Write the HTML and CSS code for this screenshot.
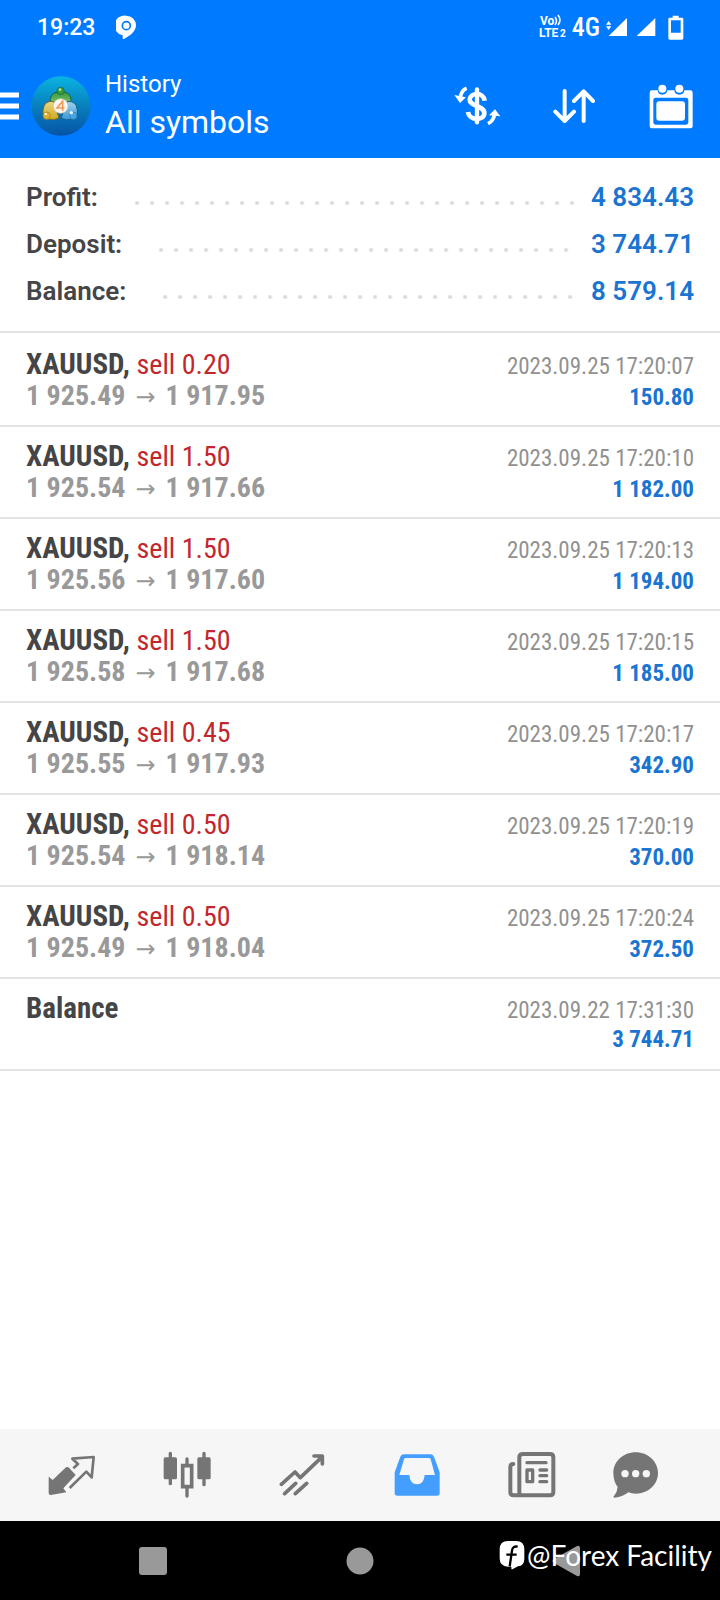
FILE: index.html
```html
<!DOCTYPE html>
<html lang="en">
<head>
<meta charset="utf-8">
<meta name="viewport" content="width=device-width, initial-scale=1">
<title>History</title>
<link rel="stylesheet" href="styles.css">
</head>
<body>
<header class="top">
  <div class="status">
    <span class="clock">19:23</span>
    <svg class="pin" width="20" height="24" viewBox="346 42 60 72"><path fill="#fff" d="M377 44a29 29 0 0 1 29 29c0 12-8 21-16 28l-19 12c-3 2-5 1-5-2v-8a29 29 0 0 1 11-59z"/><circle cx="377" cy="74" r="12" fill="none" stroke="#007aff" stroke-width="5"/></svg>
    <span class="spacer"></span>
    <svg class="volte" width="30" height="30" viewBox="0 0 30 30"><text class="volte-text" x="2" y="13">Vo</text><path d="M17 5q3 4 0 8M20 3q4 5 0 10" fill="none" stroke="#fff" stroke-width="1.6"/><text class="volte-text" x="1" y="25">LTE</text><text class="volte-small" x="22" y="25">2</text></svg>
    <span class="net">4G</span>
    <svg class="sig" width="22" height="20" viewBox="735 50 66 60"><path fill="#fff" d="M743 107l55-54v54zM735 73l8-11 8 11zM735 78l8 11 8-11z"/></svg>
    <svg class="sig2" width="20" height="20" viewBox="827 50 60 60"><path fill="#fff" d="M829 107l56-54v54z"/></svg>
    <svg width="16" height="25" viewBox="923 40 48 75"><path fill="#fff" fill-rule="evenodd" d="M937 42h18v6h10q4 0 4 4v58q0 4-4 4h-37q-4 0-4-4V52q0-4 4-4h9zM932 56v37h29V56z"/></svg>
  </div>
  <div class="appbar">
    <button class="plain menu" aria-label="Menu"><svg width="19" height="28" viewBox="0 0 19 28"><path stroke="#fff" stroke-width="5" d="M0 3h19M0 14h19M0 25h19"/></svg></button>
    <svg class="logo" width="60" height="60" viewBox="92 226 180 180">
      <defs>
        <linearGradient id="bg" x1="0" y1="0" x2="0" y2="1"><stop offset="0" stop-color="#0ab4e2"/><stop offset=".5" stop-color="#087fbd"/><stop offset="1" stop-color="#0754a6"/></linearGradient>
        <linearGradient id="gr" x1="0" y1="0" x2="0" y2="1"><stop offset="0" stop-color="#2f9a3f"/><stop offset="1" stop-color="#8cc66c"/></linearGradient>
        <linearGradient id="ye" x1="0" y1="0" x2="0" y2="1"><stop offset="0" stop-color="#e9d985"/><stop offset="1" stop-color="#d3a51f"/></linearGradient>
        <linearGradient id="bl" x1="0" y1="0" x2="0" y2="1"><stop offset="0" stop-color="#9fd3ee"/><stop offset="1" stop-color="#3b97d6"/></linearGradient>
      </defs>
      <circle cx="182" cy="316" r="89" fill="url(#bg)"/>
      <path d="M150 312q-4-34 20-38h22q24 4 20 38z" fill="url(#gr)" stroke="#1b5f4a" stroke-width="3"/>
      <circle cx="181" cy="271" r="11" fill="#3a9b3b" stroke="#1b5f4a" stroke-width="2"/><circle cx="179" cy="267" r="4" fill="#b5e39a"/>
      <path d="M160 302q-28-2-31 22-6 22 12 31 20 6 35-3z" fill="url(#ye)" stroke="#6a6a35" stroke-width="3"/>
      <circle cx="139" cy="345" r="11" fill="#dcb02c" stroke="#9a7a1c" stroke-width="2"/><circle cx="136" cy="340" r="4" fill="#fff4bd"/>
      <path d="M202 302q26 0 28 22 6 22-12 31-20 6-36-2z" fill="url(#bl)" stroke="#17608f" stroke-width="3"/>
      <circle cx="219" cy="345" r="11" fill="#4aa5df" stroke="#2a77b0" stroke-width="2"/><circle cx="213" cy="336" r="5" fill="#e5f7ff"/>
      <circle cx="181" cy="316" r="22" fill="#fdf6ee" stroke="#c9c3ae" stroke-width="2"/>
      <path d="M187 331v-29l-17 20h22" fill="none" stroke="#f09a5c" stroke-width="5"/>
    </svg>
    <div class="titles"><span class="section">History</span><h1 class="title">All symbols</h1></div>
    <button class="plain money" aria-label="Symbol filter"><svg width="48" height="42" viewBox="283 254 144 126"><g fill="none" stroke="#fff"><path stroke-width="13" stroke-linecap="round" d="M352 267v99"/><path stroke-width="14" d="M375 301c-3-26-43-26-45-3 0 20 46 18 44 42-3 22-46 21-49-5"/><path stroke-width="11" d="M321 264q-16 6-19 27M385 370q17-9 20-30"/></g><path fill="#fff" d="M284 284l35 7-18 17zM388 345l18-18 16 21z"/></svg></button>
    <button class="plain sort" aria-label="Sort"><svg width="42" height="36" viewBox="580 262 126 108"><path fill="none" stroke="#fff" stroke-width="12" stroke-linecap="round" stroke-linejoin="round" d="M615 271v89M587 333l28 28 28-28M672 361v-88M643 301l29-29 28 29"/></svg></button>
    <button class="plain" aria-label="Period"><svg width="44" height="45" viewBox="866 247 132 135"><path fill="#fff" fill-rule="evenodd" d="M874 266h18q1 13 14 13t15-13h21q1 13 15 13t15-13h18q7 0 7 7v101q0 6-7 6H874q-6 0-6-6V273q0-7 6-7zM886 288q-7 0-7 7v66q0 8 8 8h89q8 0 8-8v-66q0-7-7-7z"/><circle cx="906" cy="261" r="12" fill="#fff"/><circle cx="957" cy="261" r="12" fill="#fff"/><rect x="888" y="299" width="86" height="58" rx="9" fill="#fff"/></svg></button>
  </div>
</header>
<main class="content">
  <dl class="summary">
    <div class="sum-row"><dt>Profit:</dt><dd><span class="dots"></span>4 834.43</dd></div>
    <div class="sum-row"><dt>Deposit:</dt><dd><span class="dots"></span>3 744.71</dd></div>
    <div class="sum-row"><dt>Balance:</dt><dd><span class="dots"></span>8 579.14</dd></div>
  </dl>
  <ul class="deals">
    <li class="deal"><div class="line"><span class="symbol">XAUUSD, <span class="side">sell 0.20</span></span><time class="date">2023.09.25 17:20:07</time></div><div class="line"><span class="prices">1 925.49<span class="arrow">→</span>1 917.95</span><span class="profit">150.80</span></div></li>
    <li class="deal"><div class="line"><span class="symbol">XAUUSD, <span class="side">sell 1.50</span></span><time class="date">2023.09.25 17:20:10</time></div><div class="line"><span class="prices">1 925.54<span class="arrow">→</span>1 917.66</span><span class="profit">1 182.00</span></div></li>
    <li class="deal"><div class="line"><span class="symbol">XAUUSD, <span class="side">sell 1.50</span></span><time class="date">2023.09.25 17:20:13</time></div><div class="line"><span class="prices">1 925.56<span class="arrow">→</span>1 917.60</span><span class="profit">1 194.00</span></div></li>
    <li class="deal"><div class="line"><span class="symbol">XAUUSD, <span class="side">sell 1.50</span></span><time class="date">2023.09.25 17:20:15</time></div><div class="line"><span class="prices">1 925.58<span class="arrow">→</span>1 917.68</span><span class="profit">1 185.00</span></div></li>
    <li class="deal"><div class="line"><span class="symbol">XAUUSD, <span class="side">sell 0.45</span></span><time class="date">2023.09.25 17:20:17</time></div><div class="line"><span class="prices">1 925.55<span class="arrow">→</span>1 917.93</span><span class="profit">342.90</span></div></li>
    <li class="deal"><div class="line"><span class="symbol">XAUUSD, <span class="side">sell 0.50</span></span><time class="date">2023.09.25 17:20:19</time></div><div class="line"><span class="prices">1 925.54<span class="arrow">→</span>1 918.14</span><span class="profit">370.00</span></div></li>
    <li class="deal"><div class="line"><span class="symbol">XAUUSD, <span class="side">sell 0.50</span></span><time class="date">2023.09.25 17:20:24</time></div><div class="line"><span class="prices">1 925.49<span class="arrow">→</span>1 918.04</span><span class="profit">372.50</span></div></li>
    <li class="deal"><div class="line"><span class="symbol">Balance</span><time class="date">2023.09.22 17:31:30</time></div><div class="line line-end"><span class="profit">3 744.71</span></div></li>
  </ul>
</main>
<nav class="tabs" aria-label="Sections">
  <button class="plain tab" aria-label="Quotes"><svg width="48" height="42" viewBox="147 102 144 126"><path fill="#757575" d="M149 170l12 10 40-38q5-3 9 1l20 22-37 40 9 12-47 8q-6 0-6-6z"/><path fill="none" stroke="#757575" stroke-width="8" stroke-linejoin="round" d="M223 145l14-13-17-16 64-5-6 61-16-17-50 49"/></svg></button>
  <button class="plain tab" aria-label="Charts"><svg width="48" height="48" viewBox="490 92 144 144"><g fill="none" stroke="#757575" stroke-width="10" stroke-linecap="round"><path d="M512 99v91M613 99v94M562 116v20M562 200v27"/><path d="M549 136h27v63h-27z" stroke-width="11"/></g><rect x="492" y="111" width="40" height="66" rx="5" fill="#757575"/><rect x="593" y="111" width="40" height="66" rx="5" fill="#757575"/></svg></button>
  <button class="plain tab" aria-label="Trade"><svg width="46" height="42" viewBox="118 99 138 126"><path fill="none" stroke="#757575" stroke-width="11" stroke-linecap="round" stroke-linejoin="round" d="M125 190l41-37 16 17 66-63M223 105h25v24M135 218l33-31M167 218l34-31"/><path fill="#757575" d="M230 105h18v21z"/></svg></button>
  <button class="plain tab" aria-label="History" aria-current="page"><svg width="46" height="42" viewBox="463 99 138 126"><path fill="#449eff" fill-rule="evenodd" d="M493 100h79q8 0 11 7l17 47v62q0 8-8 8H473q-8 0-8-8v-62l17-47q3-7 11-7zM498 111q-4 0-5 4l-14 47h30q2 28 23 28t23-28h31l-13-47q-1-4-5-4z"/></svg></button>
  <button class="plain tab" aria-label="News"><svg width="48" height="46" viewBox="88 93 144 138"><g fill="none" stroke="#757575" stroke-linecap="round" stroke-linejoin="round"><path stroke-width="12" d="M134 99h80q10 0 10 10v104q0 10-10 10H105q-10 0-10-10v-75q0-9 9-9M122 222v-113q0-10 12-10"/><path stroke-width="10" d="M145 125h57M184 147h20M184 164h20M184 182h20M145 147h17v35h-17z"/></g></svg></button>
  <button class="plain tab tab-last" aria-label="Messages"><svg width="46" height="46" viewBox="400 93 138 138"><path fill="#757575" d="M468 94c37 0 67 27 67 62s-30 62-67 62q-12 0-22-4-18 15-41 16-6-1-2-5 10-12 11-27-13-17-13-42c0-35 30-62 67-62z"/><g fill="#f6f6f6"><circle cx="436" cy="158" r="11"/><circle cx="468" cy="158" r="11"/><circle cx="500" cy="158" r="11"/></g></svg></button>
</nav>
<footer class="sysnav">
  <button class="plain sys" aria-label="Recent apps"><svg width="30" height="30" viewBox="0 0 30 30"><rect x="1" y="1" width="28" height="28" rx="3" fill="#999"/></svg></button>
  <button class="plain sys" aria-label="Home"><svg width="30" height="30" viewBox="0 0 30 30"><circle cx="15" cy="15" r="13.500" fill="#999"/></svg></button>
  <button class="plain sys" aria-label="Back"><svg width="30" height="32" viewBox="0 0 30 32"><path fill="#999" d="M2 14L25 1q3-1 3 2v26q0 3-3 2L2 18q-3-2 0-4z"/></svg></button>
  <div class="credit"><svg width="26" height="30" viewBox="57 366 78 90"><path fill="#fff" d="M84 369h24q25 0 25 25v28q0 21-19 23l-17 9q-3 1-3-3v-5H84q-25 0-25-25v-27q0-25 25-25z"/><path fill="none" stroke="#000" stroke-width="7" d="M113 386q-15-3-17 12l-7 47M79 410h31"/></svg><span>@Forex Facility</span></div>
</footer>
</body>
</html>
```

FILE: styles.css
```css
* { box-sizing: border-box; }
body {
  margin: 0;
  min-height: 100vh;
  display: flex;
  flex-direction: column;
  background: #fff;
  font-family: Roboto, "Liberation Sans", sans-serif;
}
svg { display: block; flex: none; }
.plain { padding: 0; border: 0; background: none; display: flex; align-items: center; justify-content: center; }

.top { background: #007aff; color: #fff; }
.status { display: flex; align-items: center; height: 54px; padding: 0 36px 0 37px; }
.clock { font-size: 23px; font-weight: 500; }
.pin { margin-left: 21px; }
.spacer { flex: 1; }
.volte-text { font: 700 12px Roboto, sans-serif; fill: #fff; }
.volte-small { font: 700 10px Roboto, sans-serif; fill: #fff; }
.net { margin: 0 6px 0 4px; font: 500 26px "Roboto Condensed", "Liberation Sans Narrow", Roboto, sans-serif; }
.sig2 { margin: 0 12px 0 8px; }

.appbar { display: flex; align-items: center; height: 104px; padding-right: 27px; }
.menu { margin-right: 12px; }
.titles { flex: 1; margin-left: 14px; }
.section { display: block; font-size: 24px; line-height: 32px; }
.title { margin: 0; font-size: 32px; font-weight: 400; line-height: 44px; }
.money { margin-right: 51px; }
.sort { margin-right: 54px; }

.content { flex: 1; }
.summary { margin: 0; padding: 15px 26px 17px; border-bottom: 2px solid #e2e2e2; }
.sum-row { display: flex; align-items: center; height: 47px; font-size: 26px; font-weight: 600; }
.sum-row dt { color: #454547; }
.sum-row dd { flex: 1; display: flex; align-items: center; margin: 0; color: #1a75d2; }
.dots {
  flex: 1;
  height: 4px;
  margin: 12px 14px 0 37px;
  background: radial-gradient(circle at 2px 2px, #dadada 1px, #dadada00 3px) 0 0 / 15px 4px repeat-x;
}

.deals {
  margin: 0;
  padding: 2px 0 0;
  list-style: none;
  font-family: "Roboto Condensed", "Liberation Sans Narrow", Roboto, sans-serif;
}
.deal { height: 92px; padding: 13px 26px 0; border-bottom: 2px solid #e2e2e2; }
.line { display: flex; align-items: baseline; justify-content: space-between; height: 32px; line-height: 32px; }
.line-end { justify-content: flex-end; }
.symbol { font-size: 29px; font-weight: 700; color: #454547; }
.side { font-size: 28px; font-weight: 400; color: #c1272d; }
.date { font-size: 23px; color: #919191; }
.prices { font-size: 28px; font-weight: 700; color: #999; }
.arrow { margin: 0 10px; font: 24px "DejaVu Sans", sans-serif; }
.profit { font-size: 23px; font-weight: 700; color: #1a75d2; }

.tabs { display: flex; height: 92px; padding: 0 37px 0 14px; background: #f6f6f6; }
.tab { flex: 115; }
.tab-last { flex: 94; }
.sysnav { position: relative; display: flex; height: 79px; padding: 0 50px; background: #000; }
.sys { flex: 1; }
.credit {
  position: absolute;
  right: 8px;
  top: 17px;
  display: flex;
  align-items: center;
  gap: 2px;
  color: #fff;
  font: 28px/34px Lato, "Noto Sans", sans-serif;
}
```
